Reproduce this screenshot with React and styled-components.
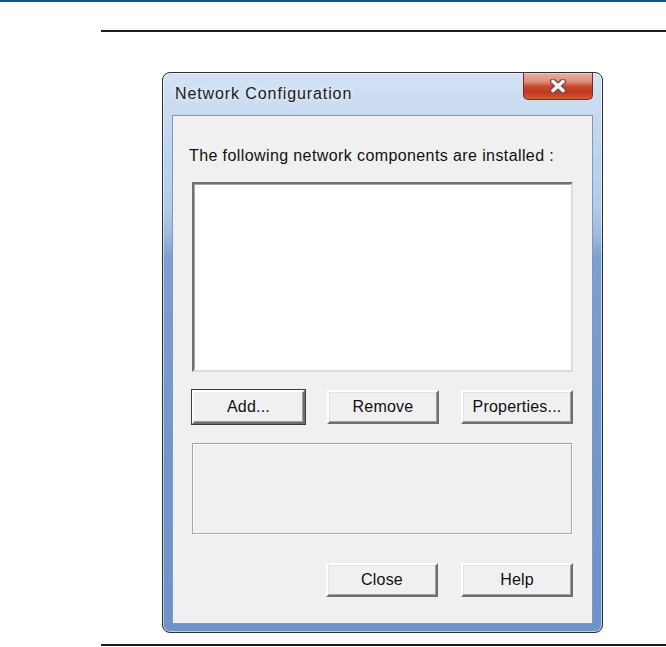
import React from "react";
import styled, { createGlobalStyle } from "styled-components";

const GlobalStyle = createGlobalStyle`
  body {
    margin: 0;
    background: #fff;
    font-family: "Liberation Sans", Arial, sans-serif;
  }
`;

const Page = styled.div`
  width: 666px;
  height: 647px;
  display: flex;
  flex-direction: column;
  overflow: hidden;
`;

const TopBar = styled.div`
  height: 2px;
  background: #0a5593;
`;

const Rule = styled.div`
  height: 2px;
  margin-left: 101px;
  margin-top: ${(p) => p.$top}px;
  background: #1c1c1c;
`;

const DialogRow = styled.div`
  display: flex;
  padding-left: 162px;
  margin-top: 40px;
`;

const Window = styled.div`
  box-sizing: border-box;
  width: 441px;
  height: 561px;
  border: 1px solid #2e2e2e;
  border-radius: 8px;
  padding: 0 9px 8px 9px;
  display: flex;
  flex-direction: column;
  background: linear-gradient(
    180deg,
    #d3e2f4 0%,
    #c0d5ee 12%,
    #b4cbe9 24%,
    #9db9e0 29%,
    #7d9fd1 33%,
    #7096cc 70%,
    #6d93cb 100%
  );
  box-shadow: inset 0 0 0 1px rgba(255, 255, 255, 0.55);
`;

const TitleBar = styled.div`
  height: 42px;
  display: flex;
  justify-content: space-between;
  align-items: flex-start;
`;

const Title = styled.div`
  padding: 12px 0 0 3px;
  font-size: 16px;
  letter-spacing: 0.9px;
  color: #1b1b1b;
  text-shadow: 0 0 6px rgba(255, 255, 255, 0.9);
`;

const CloseBox = styled.div`
  box-sizing: border-box;
  width: 70px;
  height: 27px;
  border: 1px solid #7e2b1f;
  border-top: none;
  border-radius: 0 0 5px 5px;
  display: flex;
  align-items: center;
  justify-content: center;
  background: linear-gradient(
    180deg,
    #e9b2a4 0%,
    #dc8a77 35%,
    #c9482f 52%,
    #c0371f 75%,
    #d2583f 100%
  );
  box-shadow: inset 0 1px 0 rgba(255, 255, 255, 0.35);
`;

const Client = styled.div`
  flex: 1;
  border: 1px solid #8198bb;
  background: #f0f0f0;
  padding: 31px 19px 0 19px;
  display: flex;
  flex-direction: column;
`;

const Label = styled.div`
  font-size: 16px;
  line-height: 18px;
  letter-spacing: 0.4px;
  white-space: nowrap;
  color: #111;
  margin-left: -3px;
`;

const ListBox = styled.div`
  box-sizing: border-box;
  height: 190px;
  margin-top: 17px;
  background: #fff;
  border-top: 2px solid #6f6f6f;
  border-left: 2px solid #6f6f6f;
  border-right: 2px solid #dcdcdc;
  border-bottom: 2px solid #dcdcdc;
  box-shadow: inset 1px 1px 0 #a8a8a8;
`;

const ButtonRow = styled.div`
  display: flex;
  justify-content: ${(p) => p.$justify || "space-between"};
  gap: ${(p) => p.$gap || 0}px;
  margin-top: ${(p) => p.$top}px;
`;

const Button = styled.button`
  box-sizing: border-box;
  width: ${(p) => p.$w || 112}px;
  height: 34px;
  padding: 0;
  background: #f0f0f0;
  font-family: "Liberation Sans", Arial, sans-serif;
  font-size: 16px;
  letter-spacing: 0.2px;
  color: #111;
  border-top: 2px solid #ffffff;
  border-left: 2px solid #ffffff;
  border-right: 2px solid #6e6e6e;
  border-bottom: 2px solid #6e6e6e;
  box-shadow: ${(p) =>
    p.$default
      ? "0 0 0 1px #3c3c3c, inset -1px -1px 0 #a0a0a0"
      : "inset -1px -1px 0 #a0a0a0, inset 1px 1px 0 #e3e3e3"};
  outline: none;
`;

const InfoBox = styled.div`
  box-sizing: border-box;
  width: 380px;
  height: 91px;
  margin-top: 19px;
  border: 1px solid #a6a6a6;
  box-shadow: inset 1px 1px 0 #ffffff, 1px 1px 0 #ffffff;
`;

const CloseIcon = () => (
  <svg width="18" height="14" viewBox="0 0 18 14">
    <path
      d="M4 2.5 L14 11.5 M14 2.5 L4 11.5"
      stroke="#6b4a44"
      strokeWidth="6"
      strokeLinecap="round"
      fill="none"
    />
    <path
      d="M4 2.5 L14 11.5 M14 2.5 L4 11.5"
      stroke="#f4f4f4"
      strokeWidth="3.6"
      strokeLinecap="round"
      fill="none"
    />
  </svg>
);

export default function App() {
  return (
    <Page>
      <GlobalStyle />
      <TopBar />
      <Rule $top={28} />
      <DialogRow>
        <Window>
          <TitleBar>
            <Title>Network Configuration</Title>
            <CloseBox>
              <CloseIcon />
            </CloseBox>
          </TitleBar>
          <Client>
            <Label>The following network components are installed :</Label>
            <ListBox />
            <ButtonRow $top={18}>
              <Button $w={113} $default>
                Add...
              </Button>
              <Button>Remove</Button>
              <Button>Properties...</Button>
            </ButtonRow>
            <InfoBox />
            <ButtonRow $top={29} $justify="flex-end" $gap={23}>
              <Button>Close</Button>
              <Button>Help</Button>
            </ButtonRow>
          </Client>
        </Window>
      </DialogRow>
      <Rule $top={11} />
    </Page>
  );
}
